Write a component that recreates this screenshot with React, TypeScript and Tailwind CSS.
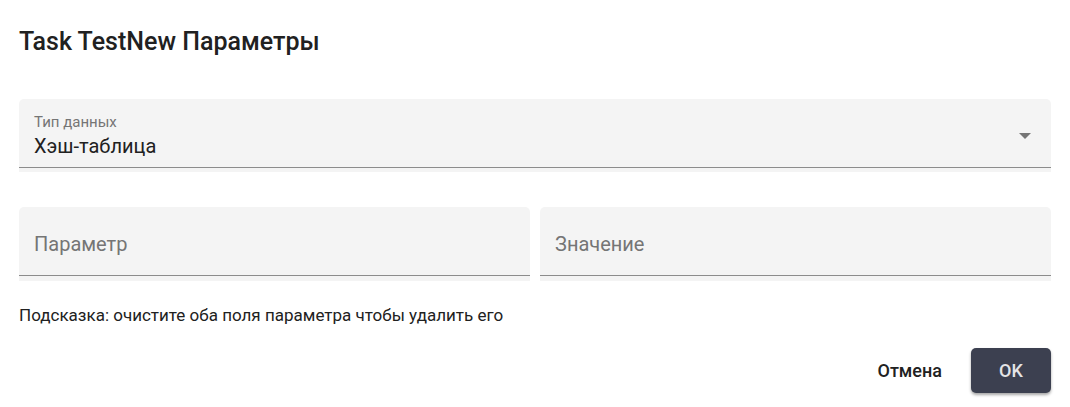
import { useState } from "react";

type TextFieldProps = { id: string; label: string };

function TextField({ id, label }: TextFieldProps) {
  return (
    <div className="min-w-0 flex-1 rounded-t-[5px] bg-[#f4f4f4] pb-[5px]">
      <div className="grid h-[69px] border-b border-[#8c8c8c]">
        <input
          id={id}
          type="text"
          placeholder=" "
          className="peer col-start-1 row-start-1 w-full bg-transparent px-[15px] pt-[26px] text-xl text-[#212121] outline-none"
        />
        <label
          htmlFor={id}
          className="pointer-events-none col-start-1 row-start-1 self-start px-[15px] pt-[13px] text-[15px] leading-5 text-[#757575] peer-placeholder-shown:self-center peer-placeholder-shown:pt-[6px] peer-placeholder-shown:text-xl"
        >
          {label}
        </label>
      </div>
    </div>
  );
}

export default function App() {
  const [type, setType] = useState("hash");
  return (
    <main className="bg-white px-[19px] pt-6 pb-3 font-['Roboto',sans-serif] text-[#212121]">
      <h1 className="text-[25px] leading-9 font-medium">Task TestNew Параметры</h1>
      <form onSubmit={(e) => e.preventDefault()}>
        <div className="mt-[39px] rounded-t-[5px] bg-[#f4f4f4] pb-1">
          <div className="grid h-[69px] border-b border-[#8c8c8c]">
            <label htmlFor="type" className="pointer-events-none z-10 col-start-1 row-start-1 self-start px-[15px] pt-[13px] text-[15px] leading-5 text-[#757575]">
              Тип данных
            </label>
            <select
              id="type"
              value={type}
              onChange={(e) => setType(e.target.value)}
              className="col-start-1 row-start-1 w-full appearance-none bg-transparent px-[15px] pt-[26px] text-xl outline-none"
            >
              <option value="hash">Хэш-таблица</option>
            </select>
            <svg viewBox="0 0 12 6" className="pointer-events-none col-start-1 row-start-1 mt-[6px] mr-5 h-[6px] w-3 self-center justify-self-end fill-[#757575]" aria-hidden="true">
              <path d="M0 0h12L6 6z" />
            </svg>
          </div>
        </div>
        <div className="mt-[35px] flex gap-[10px]">
          <TextField id="param" label="Параметр" />
          <TextField id="value" label="Значение" />
        </div>
        <p className="mt-[22px] text-[17px] leading-6">Подсказка: очистите оба поля параметра чтобы удалить его</p>
        <div className="mt-[21px] flex justify-end gap-3">
          <button type="button" className="h-[45px] px-[17px] text-lg font-medium">Отмена</button>
          <button type="submit" className="h-[45px] w-20 rounded-[5px] bg-[#3c4050] text-lg font-medium text-[#e4e4e6] shadow-[0_2px_3px_rgba(0,0,0,0.35)]">OK</button>
        </div>
      </form>
    </main>
  );
}
